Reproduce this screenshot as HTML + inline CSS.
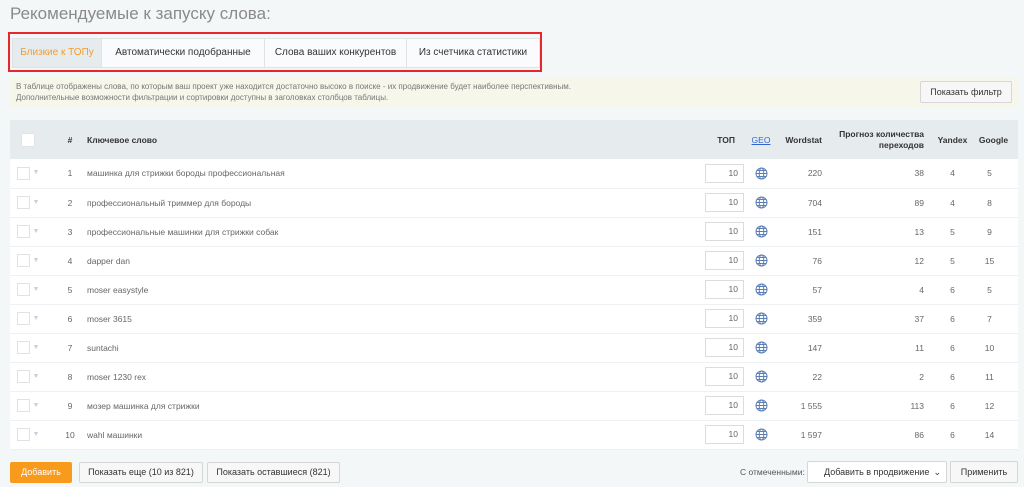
<!DOCTYPE html>
<html><head><meta charset="utf-8"><style>
body{margin:0;background:#f4f7f8;font-family:"Liberation Sans",sans-serif;width:1024px;height:487px;overflow:hidden;position:relative;color:#555}
.a{position:absolute}
h1{position:absolute;left:10px;top:4px;margin:0;font-weight:normal;font-size:17px;color:#8a8a8a}
.red{left:8px;top:32px;width:530px;height:36px;border:2px solid #e8262b}
.tabs{left:12px;top:38px;height:28px;display:flex;border:1px solid #dde3e6;background:#fafbfc}
.tabs div{font-size:10px;color:#333;line-height:28px;border-left:1px solid #dde3e6;text-align:center;white-space:nowrap;overflow:hidden}
.tabs div:first-child{border:none;background:#e6ecee;color:#f39c2b}
.info{left:10px;top:77px;width:1008px;height:30px;background:#f7f6ea;font-size:8px;color:#777;line-height:11px}
.btn{position:absolute;background:#f7f7f7;border:1px solid #d6d6d6;font-size:9px;color:#333;text-align:center;border-radius:2px;white-space:nowrap;box-sizing:border-box}
table{position:absolute;left:10px;top:120px;width:1008px;border-collapse:collapse;background:#fff;font-size:8.5px;color:#666;table-layout:fixed;line-height:10px}
th{background:#e6ecee;height:39px;font-size:8.5px;color:#333;font-weight:bold;padding:0;box-sizing:border-box}
td{height:29px;border-bottom:1px solid #eef1f3;padding:0;box-sizing:border-box;overflow:hidden;white-space:nowrap}
.cb{display:inline-block;width:11px;height:11px;border:1px solid #e2e2e2;background:#fff;vertical-align:middle}
.ar{color:#ccd;font-size:7px;margin-left:3px;vertical-align:middle}
.inp{display:inline-block;border:1px solid #dcdcdc;text-align:right;padding-right:5px;box-sizing:border-box;width:39px;height:19px;line-height:17px;vertical-align:middle}
svg{display:block;margin:0 auto}
</style></head><body>
<h1>Рекомендуемые к запуску слова:</h1>
<div class="a red"></div>
<div class="a tabs"><div style="width:88px">Близкие к ТОПу</div><div style="width:162px">Автоматически подобранные</div><div style="width:141px">Слова ваших конкурентов</div><div style="width:132px">Из счетчика статистики</div></div>
<div class="a info"><div style="padding:4px 6px">В таблице отображены слова, по которым ваш проект уже находится достаточно высоко в поиске - их продвижение будет наиболее перспективным.<br>Дополнительные возможности фильтрации и сортировки доступны в заголовках столбцов таблицы.</div></div>
<div class="btn" style="left:920px;top:81px;width:92px;height:22px;line-height:20px">Показать фильтр</div>
<table>
<colgroup><col style="width:36px"><col style="width:40px"><col><col style="width:44px"><col style="width:34px"><col style="width:50px"><col style="width:102px"><col style="width:45px"><col style="width:43px"></colgroup>
<tr><th style="text-align:center"><span class="cb" style="width:12px;height:12px"></span></th><th style="text-align:center;padding-left:8px">#</th><th style="text-align:left;padding-left:1px">Ключевое слово</th><th style="text-align:right;padding-right:9px">ТОП</th><th style="font-weight:normal;color:#36c;text-decoration:underline">GEO</th><th style="text-align:right;padding-right:6px">Wordstat</th><th style="text-align:right;line-height:11px;padding-right:6px">Прогноз количества<br>переходов</th><th style="text-align:center">Yandex</th><th style="text-align:center;padding-right:6px">Google</th></tr>
</table>
<script>
var d=[["машинка для стрижки бороды профессиональная",220,38,4,5],["профессиональный триммер для бороды",704,89,4,8],["профессиональные машинки для стрижки собак",151,13,5,9],["dapper dan",76,12,5,15],["moser easystyle",57,4,6,5],["moser 3615",359,37,6,7],["suntachi",147,11,6,10],["moser 1230 rex",22,2,6,11],["мозер машинка для стрижки","1 555",113,6,12],["wahl машинки","1 597",86,6,14]];
var g='<svg width="13" height="13" viewBox="0 0 13 13" fill="none" stroke="#5b7fb5" stroke-width="1"><circle cx="6.5" cy="6.5" r="5.5"/><ellipse cx="6.5" cy="6.5" rx="2.3" ry="5.5"/><path d="M1 6.5h11M2 3.5h9M2 9.5h9"/></svg>';
var h='';d.forEach(function(r,i){h+='<tr><td style="text-align:center"><span class="cb"></span><span class="ar">▼</span></td><td style="text-align:center;padding-left:8px">'+(i+1)+'</td><td style="padding-left:1px">'+r[0]+'</td><td style="text-align:right"><span class="inp">10</span></td><td>'+g+'</td><td style="text-align:right;padding-right:6px">'+r[1]+'</td><td style="text-align:right;padding-right:6px">'+r[2]+'</td><td style="text-align:center">'+r[3]+'</td><td style="text-align:center;padding-right:14px">'+r[4]+'</td></tr>';});
document.querySelector('table').insertAdjacentHTML('beforeend',h);
</script>
<div class="btn" style="left:10px;top:462px;width:62px;height:21px;line-height:19px;background:#f89a1c;border-color:#f89a1c;color:#fff">Добавить</div>
<div class="btn" style="left:79px;top:462px;width:124px;height:21px;line-height:19px">Показать еще (10 из 821)</div>
<div class="btn" style="left:207px;top:462px;width:133px;height:21px;line-height:19px">Показать оставшиеся (821)</div>
<div class="a" style="left:740px;top:467px;font-size:8.5px;color:#555">С отмеченными:</div>
<div class="btn" style="left:807px;top:461px;width:140px;height:22px;line-height:20px;background:#fff;text-align:left;padding-left:16px">Добавить в продвижение<span style="position:absolute;right:5px">⌄</span></div>
<div class="btn" style="left:950px;top:461px;width:68px;height:22px;line-height:20px">Применить</div>
</body></html>
